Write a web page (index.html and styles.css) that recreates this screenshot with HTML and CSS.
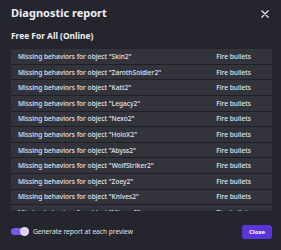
FILE: index.html
```html
<!DOCTYPE html>
<html lang="en">
<head>
  <meta charset="UTF-8" />
  <meta name="viewport" content="width=device-width, initial-scale=1.0" />
  <title>Diagnostic report</title>
  <link rel="stylesheet" href="styles.css">
</head>
<body>
  <div class="dialog">
    <div class="header">
      <h1>Diagnostic report</h1>
      <button class="close-x" aria-label="Close">
        <svg width="8" height="8" viewBox="0 0 8 8">
          <path d="M0.8 0.8 L7.2 7.2 M7.2 0.8 L0.8 7.2" stroke="#e6e6ee" stroke-width="1.25" stroke-linecap="round" />
        </svg>
      </button>
    </div>

    <h2>Free For All (Online)</h2>

    <div class="report">
      <div class="row"><span>Missing behaviors for object "Skin2"</span><span>Fire bullets</span></div>
      <div class="row"><span>Missing behaviors for object "ZarothSoldier2"</span><span>Fire bullets</span></div>
      <div class="row"><span>Missing behaviors for object "Katt2"</span><span>Fire bullets</span></div>
      <div class="row"><span>Missing behaviors for object "Legacy2"</span><span>Fire bullets</span></div>
      <div class="row"><span>Missing behaviors for object "Nexo2"</span><span>Fire bullets</span></div>
      <div class="row"><span>Missing behaviors for object "HoloX2"</span><span>Fire bullets</span></div>
      <div class="row"><span>Missing behaviors for object "Abyss2"</span><span>Fire bullets</span></div>
      <div class="row"><span>Missing behaviors for object "WolfStriker2"</span><span>Fire bullets</span></div>
      <div class="row"><span>Missing behaviors for object "Zoey2"</span><span>Fire bullets</span></div>
      <div class="row"><span>Missing behaviors for object "Knives2"</span><span>Fire bullets</span></div>
      <div class="row"><span>Missing behaviors for object "Mirage2"</span><span>Fire bullets</span></div>
    </div>

    <div class="footer">
      <label class="toggle">
        <span class="track"><span class="thumb"></span></span>
        Generate report at each preview
      </label>
      <button class="close-btn">Close</button>
    </div>
  </div>
</body>
</html>
```

FILE: styles.css
```css
body {
  margin: 0;
  padding: 0;
  background-color: #25252e;
  font-family: "Noto Sans", "Open Sans", sans-serif;
  color: #f0f0f5;
}

.dialog {
  width: 281px;
  height: 250px;
  box-sizing: border-box;
  padding: 7px 9px 0 11px;
  display: flex;
  flex-direction: column;
}

.header {
  display: flex;
  align-items: center;
  justify-content: space-between;
  height: 12px;
}

.header h1 {
  margin: 0;
  font-size: 11px;
  line-height: 12px;
  font-weight: 700;
}

.close-x {
  background: none;
  border: none;
  padding: 0;
  margin: 1px 3px 0 0;
  display: flex;
  cursor: pointer;
}

.dialog h2 {
  margin: 12px 0 8.3px;
  font-size: 8.4px;
  line-height: 10px;
  font-weight: 700;
}

.report {
  width: 261px;
  height: 162px;
  overflow: hidden;
  flex-shrink: 0;
}

.row {
  display: flex;
  justify-content: space-between;
  align-items: center;
  height: 14.6px;
  border-bottom: 1px solid #1f1f26;
  background-color: #33333c;
  padding: 0 21px 0 7px;
  font-size: 6.6px;
  font-weight: 500;
  color: #e6e6ec;
  white-space: nowrap;
}

.footer {
  display: flex;
  align-items: center;
  justify-content: space-between;
  height: 14px;
  margin-top: 13.7px;
}

.toggle {
  display: flex;
  align-items: center;
  gap: 4px;
  font-size: 6.6px;
  color: #e4e4ea;
}

.track {
  width: 18px;
  height: 7px;
  border-radius: 4px;
  background-color: #7b59e6;
  display: flex;
  justify-content: flex-end;
  align-items: center;
}

.thumb {
  width: 9px;
  height: 9px;
  border-radius: 50%;
  background-color: #ddd5fb;
}

.close-btn {
  width: 30px;
  height: 14px;
  border: none;
  border-radius: 3px;
  background-color: #5a36d8;
  color: white;
  font-family: "Noto Sans", sans-serif;
  font-size: 6px;
  font-weight: 700;
  padding: 0;
  cursor: pointer;
}
```
